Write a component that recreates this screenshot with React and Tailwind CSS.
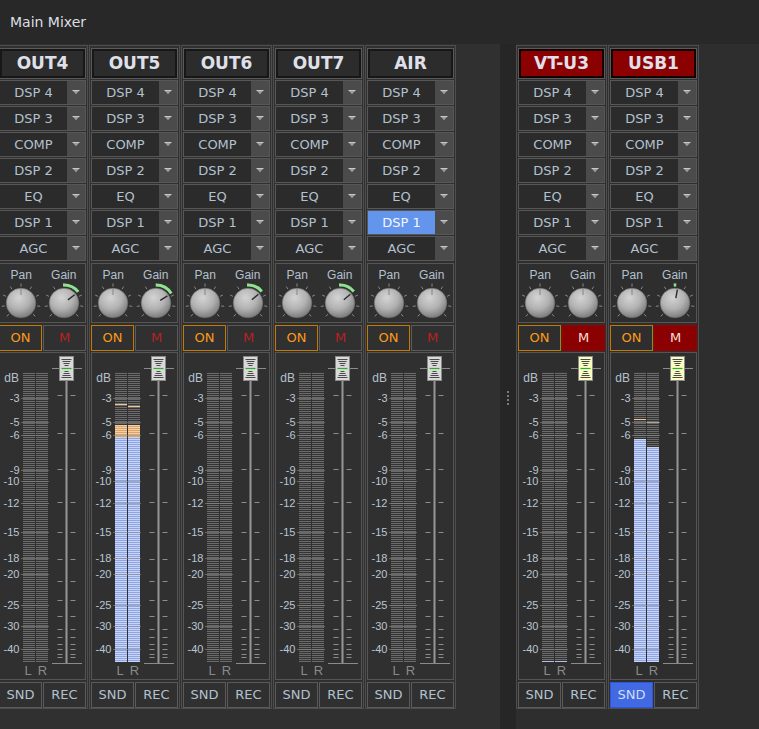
import React from 'react';

const ROWS = ['DSP 4', 'DSP 3', 'COMP', 'DSP 2', 'EQ', 'DSP 1', 'AGC'];

const SCALE = [
  ['-3', 398], ['-5', 422], ['-6', 435], ['-9', 470], ['-10', 481], ['-12', 503],
  ['-15', 532], ['-18', 558], ['-20', 574], ['-25', 605], ['-30', 626], ['-40', 649],
];

const FADER_TICKS = [395, 433, 469, 502, 532, 559, 581, 600, 616, 629, 637, 644, 649, 654, 657];

const CHANNELS = [
  { name: 'OUT4', gain: { a0: -3, a1: 52 } },
  { name: 'OUT5', gain: { a0: 0, a1: 58 }, level: { L: { top: 437, orange: 425, peak: 404 }, R: { top: 437, orange: 425, peak: 406 } } },
  { name: 'OUT6', gain: { a0: -3, a1: 50 } },
  { name: 'OUT7', gain: { a0: -3, a1: 50 } },
  { name: 'AIR', selected: 'DSP 1' },
];

const RIGHT = [
  { name: 'VT-U3', red: true, muted: true, yellow: true, floor: true },
  { name: 'USB1', red: true, muted: true, yellow: true, snd: true, gain: { a0: -4, a1: 4, ind: 10 }, level: { L: { top: 439, peak: 419 }, R: { top: 447, peak: 422 } } },
];

function Arrow() {
  return (
    <svg width="8" height="5" className="block">
      <path d="M0.5 0.5H7.5" stroke="#c9c9c9" strokeWidth="1" />
      <path d="M1 1L7 1L4 4.2Z" fill="#9c9c9c" />
    </svg>
  );
}

function Dropdown({ label, active }) {
  return (
    <div className="flex h-[25px] border border-[#575757]">
      <div
        className={
          active
            ? 'flex-1 flex items-center justify-center bg-[#6495ed] text-[#f4f7ff]'
            : 'flex-1 flex items-center justify-center bg-[#2b2b2b] text-[#b3c1cf]'
        }
      >
        {label}
      </div>
      <div className="w-[18px] bg-[#4b4b4b] flex items-center justify-center">
        <Arrow />
      </div>
    </div>
  );
}

const pt = (cx, cy, a, r) => [cx + r * Math.sin((a * Math.PI) / 180), cy - r * Math.cos((a * Math.PI) / 180)];

function Knob({ gain }) {
  const cx = 21;
  const cy = 20;
  const ticks = [-133, -100, -66, -33, 0, 33, 66, 100, 133];
  let arc = null;
  let ind;
  if (gain) {
    const [x0, y0] = pt(cx, cy, gain.a0, 18);
    const [x1, y1] = pt(cx, cy, gain.a1, 18);
    arc = `M${x0.toFixed(2)} ${y0.toFixed(2)} A18 18 0 0 1 ${x1.toFixed(2)} ${y1.toFixed(2)}`;
    const ia = gain.ind !== undefined ? gain.ind : gain.a1;
    const [a, b] = pt(cx, cy, ia, 5);
    const [c, d] = pt(cx, cy, ia, 13.5);
    ind = <line x1={a} y1={b} x2={c} y2={d} stroke="#2a2a2a" strokeWidth="1.4" />;
  } else {
    ind = <line x1={cx} y1={cy - 8} x2={cx} y2={cy - 14.5} stroke="#8e8e8e" strokeWidth="1.2" />;
  }
  return (
    <svg width="42" height="40" className="block">
      <defs>
        <radialGradient id="knobgrad" cx="42%" cy="32%" r="70%">
          <stop offset="0" stopColor="#d4d4d4" />
          <stop offset="0.55" stopColor="#b2b2b2" />
          <stop offset="1" stopColor="#7a7a7a" />
        </radialGradient>
      </defs>
      {ticks.map((t) => {
        const [x1, y1] = pt(cx, cy, t, 16.5);
        const [x2, y2] = pt(cx, cy, t, 19.5);
        return <line key={t} x1={x1} y1={y1} x2={x2} y2={y2} stroke="#8a8a8a" strokeWidth="1" />;
      })}
      {arc && <path d={arc} stroke="#8fe38f" strokeWidth="3" fill="none" strokeLinecap="butt" />}
      <circle cx={cx} cy={cy} r="14.8" fill="url(#knobgrad)" stroke="#6c6c6c" strokeWidth="0.6" />
      {ind}
    </svg>
  );
}

function Meter({ id, level, yellow, floor }) {
  const y = (v) => v - 353;
  const bars = [
    { x: 23, key: 'L' },
    { x: 36, key: 'R' },
  ];
  const capLines = [
    [6, 10], [8, 8], [10, 6], [12, 4], [18, 4], [20, 6], [22, 8], [24, 10],
  ];
  return (
    <svg width="85" height="326" className="block">
      <defs>
        <pattern id={`gp${id}`} width="4" height="2" patternUnits="userSpaceOnUse">
          <rect width="4" height="2" fill="#343434" />
          <rect width="4" height="1" fill="#6a6a6a" />
        </pattern>
        <pattern id={`bp${id}`} width="4" height="2" patternUnits="userSpaceOnUse">
          <rect width="4" height="2" fill="#8fa5e2" />
          <rect width="4" height="1" fill="#c8d5f8" />
        </pattern>
        <pattern id={`op${id}`} width="4" height="2" patternUnits="userSpaceOnUse">
          <rect width="4" height="2" fill="#d9a46c" />
          <rect width="4" height="1" fill="#f6d0a0" />
        </pattern>
      </defs>

      <text x="19" y="29" textAnchor="end" fontSize="12" fill="#b3c1cf" fontFamily="'Liberation Sans', Arial, sans-serif">dB</text>
      {SCALE.map(([t, v]) => (
        <text key={t} x="19.5" y={y(v) + 4} textAnchor="end" fontSize="11" fill="#b8c6d4" fontFamily="'Liberation Sans', Arial, sans-serif">
          {t}
        </text>
      ))}

      {bars.map((b) => {
        const lv = level ? level[b.key] : null;
        return (
          <g key={b.key}>
            <rect x={b.x} y="19" width="12" height="290" fill={`url(#gp${id})`} />
            {lv && <rect x={b.x} y={y(lv.top)} width="12" height={309 - y(lv.top)} fill={`url(#bp${id})`} />}
            {lv && lv.orange && <rect x={b.x} y={y(lv.orange)} width="12" height={lv.top - lv.orange} fill={`url(#op${id})`} />}
            {lv && <rect x={b.x} y={y(lv.peak)} width="12" height="1" fill="#f3c48c" />}
            {floor && <rect x={b.x} y="308" width="12" height="1" fill="#aebfe8" />}
          </g>
        );
      })}
      {SCALE.map(([t, v]) => (
        <line key={t} x1="21" x2="49" y1={y(v) + 0.5} y2={y(v) + 0.5} stroke="#8a8a8a" strokeOpacity="0.6" strokeWidth="1" />
      ))}

      <text x="28" y="322" textAnchor="middle" fontSize="13" fill="#8a8a8a" fontFamily="'Liberation Sans', Arial, sans-serif">L</text>
      <text x="42.5" y="322" textAnchor="middle" fontSize="13" fill="#8a8a8a" fontFamily="'Liberation Sans', Arial, sans-serif">R</text>

      {FADER_TICKS.map((v) => (
        <g key={v}>
          <line x1="57.5" x2="62.5" y1={y(v) + 0.5} y2={y(v) + 0.5} stroke="#8c8c8c" strokeWidth="1" />
          <line x1="70.5" x2="75.5" y1={y(v) + 0.5} y2={y(v) + 0.5} stroke="#8c8c8c" strokeWidth="1" />
        </g>
      ))}
      <line x1="52" x2="82" y1="15.5" y2="15.5" stroke="#8a8a8a" strokeWidth="1" />
      <line x1="52" x2="82" y1="310.5" y2="310.5" stroke="#8a8a8a" strokeWidth="1" />
      <line x1="66.5" x2="66.5" y1="27" y2="310" stroke="#969696" strokeWidth="2" />

      <rect x="59.5" y="3.5" width="14" height="24" fill={yellow ? '#fbfbc4' : '#d9d9d9'} stroke="#8a8a8a" strokeWidth="1" />
      {capLines.map(([yy, w]) => (
        <line key={yy} x1={66.5 - w / 2} x2={66.5 + w / 2} y1={yy + 0.5} y2={yy + 0.5} stroke="#4a4a4a" strokeWidth="1" />
      ))}
      <line x1="61.5" x2="71.5" y1="15.5" y2="15.5" stroke="#22b422" strokeWidth="1.2" />
    </svg>
  );
}

function Strip({ ch, id }) {
  return (
    <div className="w-[91px] shrink-0 flex flex-col border border-[#4e4e4e] px-[1px] pt-[2px]">
      <div className="h-[31px] border border-[#5a5a5a]">
        <div
          className={
            ch.red
              ? 'h-full border-2 border-[#140000] bg-[#8b0000] flex items-center justify-center text-[17px] font-bold text-[#dfe0ea]'
              : 'h-full border-2 border-[#171717] bg-[#2c2c2c] flex items-center justify-center text-[17px] font-bold text-[#dfe0ea]'
          }
        >
          {ch.name}
        </div>
      </div>

      <div className="mt-[1px] flex flex-col gap-[1px] text-[13px]">
        {ROWS.map((r) => (
          <Dropdown key={r} label={r} active={ch.selected === r} />
        ))}
      </div>

      <div className="mt-[2px] h-[60px] border border-[#555555] grid grid-cols-2">
        {['Pan', 'Gain'].map((l) => (
          <div key={l} className="flex flex-col items-center pt-[3px]">
            <div className="h-[16px] leading-[16px] text-[12px] text-[#b3c1cf] font-['Liberation_Sans',Arial,sans-serif]">{l}</div>
            <Knob gain={l === 'Gain' ? ch.gain : null} />
          </div>
        ))}
      </div>

      <div className="mt-[2px] h-[26px] grid grid-cols-2 gap-[1px] text-[13px]">
        <div className="border border-[#c47a00] flex items-center justify-center text-[#ff9a16]">ON</div>
        {ch.muted ? (
          <div className="border border-[#9a0000] bg-[#8b0000] flex items-center justify-center text-[#f6dede]">M</div>
        ) : (
          <div className="border border-[#5a5a5a] flex items-center justify-center text-[#b82222]">M</div>
        )}
      </div>

      <div className="mt-[1px] h-[328px] border border-[#555555]">
        <Meter id={id} level={ch.level} yellow={ch.yellow} floor={ch.floor} />
      </div>

      <div className="mt-[2px] h-[26px] grid grid-cols-2 gap-[1px] text-[13px]">
        {ch.snd ? (
          <div className="border border-[#2f56d8] bg-[#4169e1] flex items-center justify-center text-[#cfdcf6]">SND</div>
        ) : (
          <div className="border border-[#5a5a5a] flex items-center justify-center text-[#b3c1cf]">SND</div>
        )}
        <div className="border border-[#5a5a5a] flex items-center justify-center text-[#b3c1cf]">REC</div>
      </div>
    </div>
  );
}

export default function App() {
  return (
    <div className="w-[759px] h-[729px] overflow-hidden flex flex-col bg-[#2e2e2e] font-['DejaVu_Sans',Verdana,sans-serif]">
      <div className="h-[44px] shrink-0 bg-[#282828] flex items-center pl-[10px] text-[14px] text-[#dcdfe4]">Main Mixer</div>
      <div className="flex-1 flex min-h-0">
        <div className="w-[500px] shrink-0 flex items-start pt-[1px] bg-[#303030]">
          <div className="flex gap-[1px] ml-[-3px]">
            {CHANNELS.map((c, i) => (
              <Strip key={c.name} ch={c} id={`l${i}`} />
            ))}
          </div>
        </div>
        <div className="w-[16px] shrink-0 bg-[#262626] flex flex-col items-center pt-[347px] gap-[2px]">
          <div className="w-[2px] h-[2px] bg-[#7a7a7a]" />
          <div className="w-[2px] h-[2px] bg-[#7a7a7a]" />
          <div className="w-[2px] h-[2px] bg-[#7a7a7a]" />
          <div className="w-[2px] h-[2px] bg-[#7a7a7a]" />
        </div>
        <div className="flex-1 flex items-start gap-[1px] pt-[1px]">
          {RIGHT.map((c, i) => (
            <Strip key={c.name} ch={c} id={`r${i}`} />
          ))}
        </div>
      </div>
    </div>
  );
}
